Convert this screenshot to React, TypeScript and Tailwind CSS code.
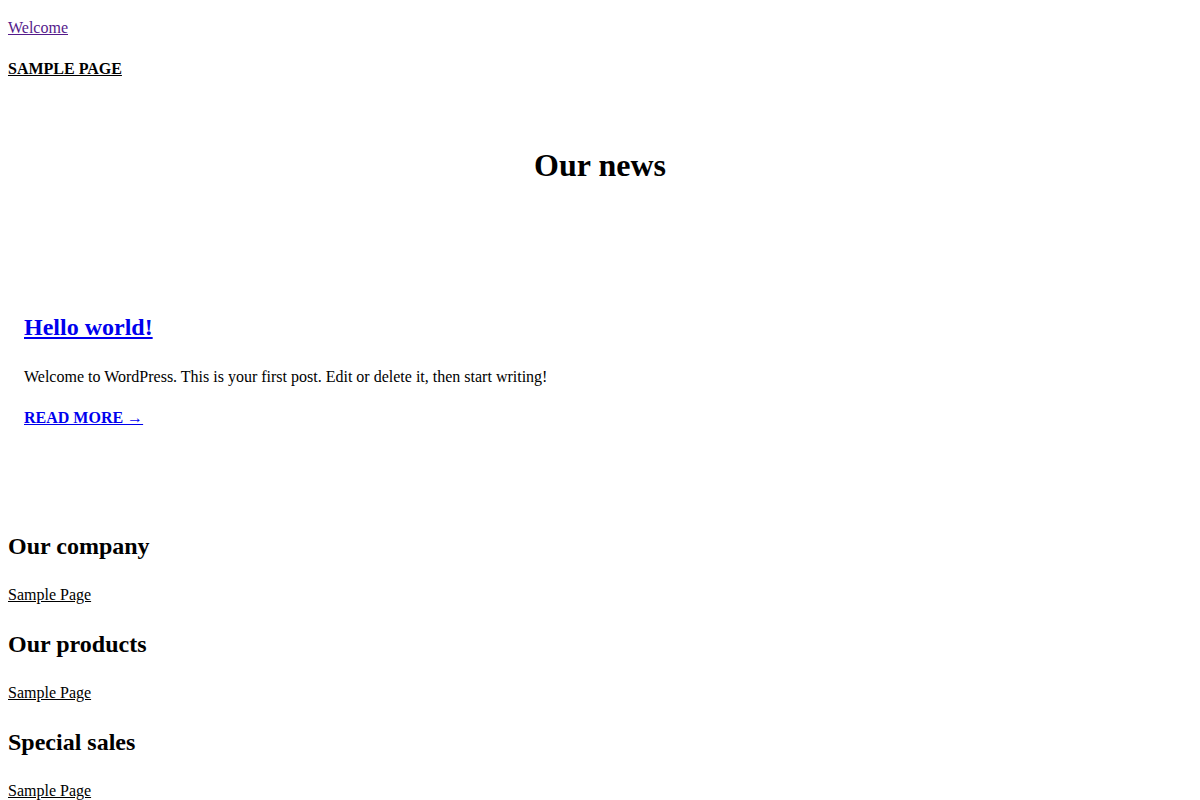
const serif = { fontFamily: '"Liberation Serif", "Times New Roman", serif' };

const footerCols = ['Our company', 'Our products', 'Special sales'];

export default function App() {
  return (
    <div className="bg-white text-black px-2 pb-6 min-h-screen" style={serif}>
      {/* Header */}
      <header>
        <div className="pt-[19px] text-base leading-[18px]">
          <a href="#" className="text-[#551a8b] underline">
            Welcome
          </a>
        </div>
        <nav className="mt-[23px] text-base leading-[18px]">
          <a href="#" className="font-bold uppercase underline text-black">
            Sample Page
          </a>
        </nav>
      </header>

      {/* News */}
      <main>
        <h1 className="mt-[69px] text-center text-[32px] leading-[37px] font-bold">Our news</h1>

        <article className="px-4">
          <h2 className="mt-[129px] text-[24px] leading-[28px] font-bold">
            <a href="#" className="text-[#0000ee] underline">
              Hello world!
            </a>
          </h2>
          <p className="mt-[27px] text-base leading-[18px]">
            Welcome to WordPress. This is your first post. Edit or delete it, then start writing!
          </p>
          <div className="mt-[23px] text-base leading-[18px]">
            <a href="#" className="text-[#0000ee] font-bold uppercase underline">
              Read more →
            </a>
          </div>
        </article>
      </main>

      {/* Footer */}
      <footer className="mt-[78px]">
        {footerCols.map((title) => (
          <section key={title} className="pt-[27px] first:pt-[27px]">
            <h2 className="text-[24px] leading-[28px] font-bold">{title}</h2>
            <div className="mt-[26px] mb-[-1px] text-base leading-[18px]">
              <a href="#" className="underline text-black">
                Sample Page
              </a>
            </div>
          </section>
        ))}
      </footer>
    </div>
  );
}
